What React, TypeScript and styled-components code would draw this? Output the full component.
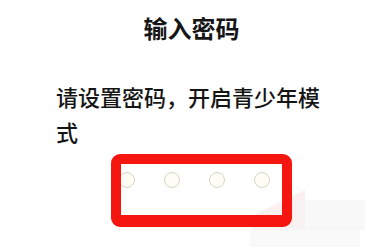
import React from "react";
import styled, { createGlobalStyle } from "styled-components";

const Global = createGlobalStyle`
  html, body { margin: 0; padding: 0; background: #ffffff; }
  body { font-family: "Noto Sans CJK SC", "Noto Sans", sans-serif; color: #1b1b1b; }
`;

const Page = styled.div`
  position: relative;
  width: 383px;
  height: 248px;
  overflow: hidden;
  background: #ffffff;
  display: flex;
  flex-direction: column;
`;

const Title = styled.h1`
  margin: 0;
  padding-top: 12px;
  font-size: 24px;
  line-height: 32px;
  font-weight: 700;
  text-align: center;
  color: #151515;
`;

const Subtitle = styled.p`
  margin: 35px 0 0;
  padding: 0 56px;
  font-size: 22px;
  line-height: 35px;
  font-weight: 500;
  color: #151515;
`;

const Dots = styled.div`
  display: flex;
  justify-content: center;
  gap: 29px;
  margin-top: 23px;
  padding-left: 5px;
`;

const Dot = styled.span`
  width: 14px;
  height: 14px;
  border-radius: 50%;
  border: 1px solid #d6d6c6;
  background: #fdfdf5;
  box-sizing: content-box;
`;

const Highlight = styled.div`
  position: absolute;
  left: 111px;
  top: 154px;
  width: 181px;
  height: 73px;
  box-sizing: border-box;
  border: 10px solid #f5170f;
  border-bottom-width: 12px;
  border-radius: 9px;
  pointer-events: none;
`;

const Watermark = styled.svg`
  position: absolute;
  left: 240px;
  top: 185px;
  pointer-events: none;
`;

export default function App() {
  return (
    <>
      <Global />
      <Page>
        <Title>输入密码</Title>
        <Subtitle>请设置密码，开启青少年模式</Subtitle>
        <Dots>
          <Dot />
          <Dot />
          <Dot />
          <Dot />
        </Dots>
        <Watermark width="143" height="63" viewBox="0 0 143 63">
          <polygon points="14,30 65,5 65,45 14,45" fill="#f9e4e4" opacity="0.6" />
          <rect x="55" y="15" width="70" height="30" fill="#f4f4f4" opacity="0.6" />
          <rect x="10" y="42" width="110" height="20" fill="#f7f7f7" opacity="0.7" />
        </Watermark>
        <Highlight />
      </Page>
    </>
  );
}
